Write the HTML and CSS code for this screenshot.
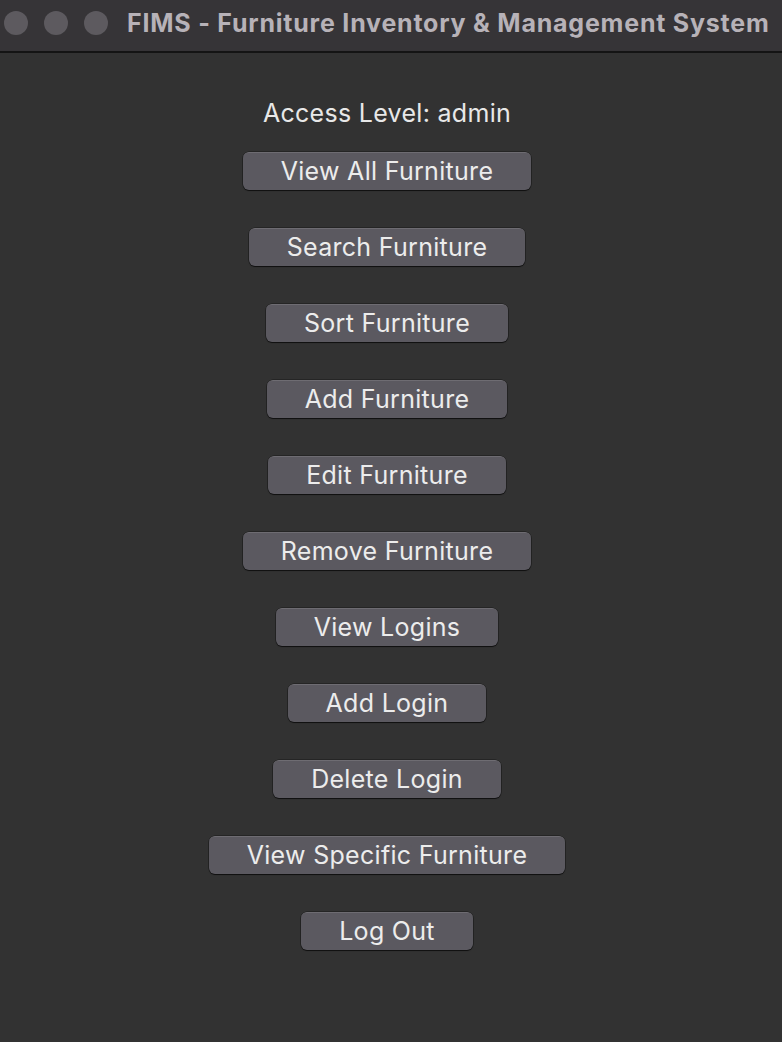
FILE: index.html
```html
<!DOCTYPE html>
<html>
<head>
<meta charset="utf-8">
<link rel="stylesheet" href="styles.css">
</head>
<body>
<div class="window">
  <header class="titlebar">
    <div class="lights">
      <span class="light"></span>
      <span class="light"></span>
      <span class="light"></span>
    </div>
    <div class="title">FIMS - Furniture Inventory &amp; Management System</div>
  </header>
  <main class="content">
    <div class="access">Access Level: admin</div>
    <button class="btn">View All Furniture</button>
    <button class="btn">Search Furniture</button>
    <button class="btn">Sort Furniture</button>
    <button class="btn">Add Furniture</button>
    <button class="btn">Edit Furniture</button>
    <button class="btn">Remove Furniture</button>
    <button class="btn">View Logins</button>
    <button class="btn">Add Login</button>
    <button class="btn">Delete Login</button>
    <button class="btn">View Specific Furniture</button>
    <button class="btn">Log Out</button>
  </main>
</div>
</body>
</html>
```
FILE: styles.css
```css
html, body {
  margin: 0;
  padding: 0;
  background: #323232;
  width: 782px;
  height: 1042px;
  overflow: hidden;
  font-family: Inter, "Noto Sans", "Liberation Sans", sans-serif;
}
.window {
  display: flex;
  flex-direction: column;
  height: 1042px;
}
.titlebar {
  background: #363437;
  border-bottom: 2px solid #141414;
  display: flex;
  align-items: center;
  box-sizing: border-box;
  height: 53px;
}
.lights {
  display: flex;
  gap: 16px;
  padding-left: 4px;
  margin-top: -6px;
}
.light {
  width: 24px;
  height: 24px;
  border-radius: 50%;
  background: #5d5a5f;
}
.title {
  margin-left: 19px;
  margin-top: -6px;
  font-size: 25px;
  font-weight: 700;
  color: #b7b2b8;
  letter-spacing: 0.78px;
  white-space: nowrap;
}
.content {
  display: flex;
  flex-direction: column;
  align-items: center;
  padding-right: 8px;
  padding-top: 44px;
}
.access {
  font-size: 25px;
  letter-spacing: 0.3px;
  color: #e8e8e8;
  line-height: 32px;
  margin-bottom: 23px;
}
.btn {
  font-family: inherit;
  font-size: 25px;
  letter-spacing: 0.3px;
  color: #ececec;
  background: #5b5960;
  border: none;
  border-top: 1px solid #6e6c72;
  border-radius: 6px;
  box-shadow: 0 1px 1px rgba(0,0,0,0.6), 0 0 0 0.5px rgba(0,0,0,0.5);
  height: 38px;
  padding: 0 38px;
  margin-bottom: 38px;
  line-height: 35px;
}
```
